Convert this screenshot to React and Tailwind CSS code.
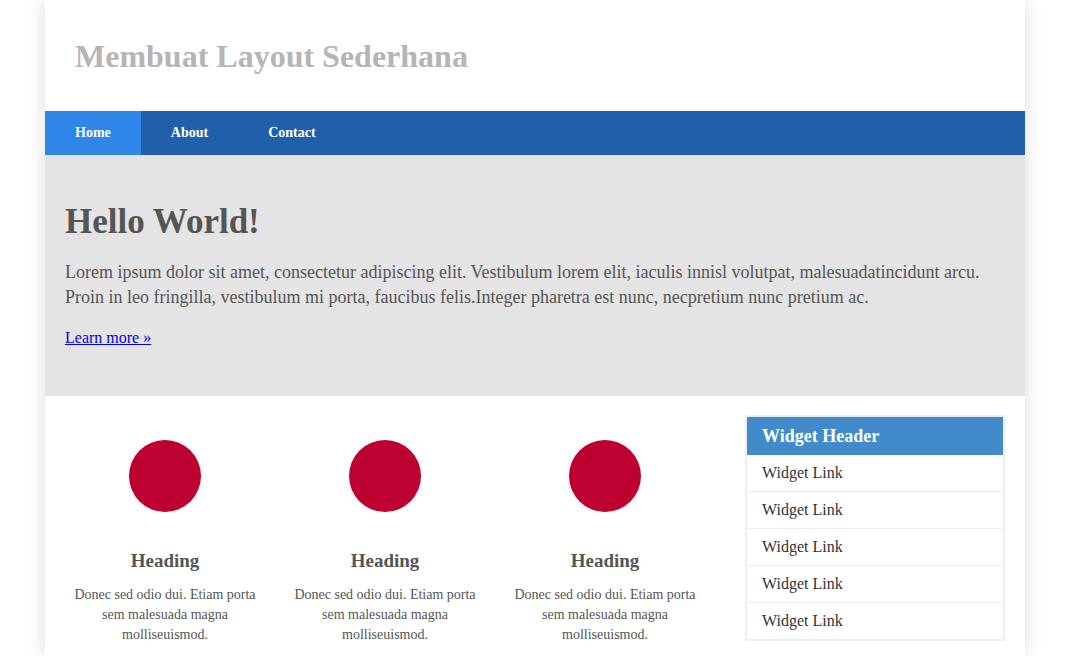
import React from 'react';

const serif = { fontFamily: '"Liberation Serif", "Times New Roman", serif' };

const NavItem = ({ label, active }) => (
  <a
    href="#"
    className={
      active
        ? 'block px-[30px] leading-[44px] text-[14px] font-bold text-white bg-[#2e86e8]'
        : 'block px-[30px] leading-[44px] text-[14px] font-bold text-white'
    }
  >
    {label}
  </a>
);

const Feature = () => (
  <div className="w-[220px] flex flex-col items-center px-[10px]">
    <div className="w-[72px] h-[72px] rounded-full bg-[#bd002f] mt-[44px]" />
    <h3 className="mt-[37px] text-[19px] font-bold text-[#555] leading-[24px]">Heading</h3>
    <p className="mt-[12px] text-[14px] leading-[20px] text-[#555] text-center">
      Donec sed odio dui. Etiam porta sem malesuada magna molliseuismod.
    </p>
  </div>
);

const App = () => {
  const links = ['Widget Link', 'Widget Link', 'Widget Link', 'Widget Link', 'Widget Link'];
  return (
    <div className="min-h-[656px] bg-white" style={serif}>
      <div className="w-[980px] ml-[45px] bg-white shadow-[0_0_18px_rgba(0,0,0,0.14)] min-h-[656px]">
        <header className="h-[111px] flex items-center px-[30px]">
          <h1 className="text-[32px] font-bold text-[#b5b5b5] mt-[1px]">Membuat Layout Sederhana</h1>
        </header>
        <nav className="h-[44px] bg-[#2060ab] flex">
          <NavItem label="Home" active />
          <NavItem label="About" />
          <NavItem label="Contact" />
        </nav>
        <section className="bg-[#e4e4e4] h-[241px] px-[20px] pt-[45px]">
          <h2 className="text-[35px] font-bold text-[#555] leading-[44px]">Hello World!</h2>
          <p className="mt-[16px] text-[18px] leading-[25px] text-[#555]">
            Lorem ipsum dolor sit amet, consectetur adipiscing elit. Vestibulum lorem elit, iaculis innisl volutpat, malesuadatincidunt arcu.
            <br />
            Proin in leo fringilla, vestibulum mi porta, faucibus felis.Integer pharetra est nunc, necpretium nunc pretium ac.
          </p>
          <a href="#" className="inline-block mt-[18px] text-[16px] text-[#0000ee] underline leading-[20px]">
            Learn more »
          </a>
        </section>
        <div className="flex px-[10px]">
          <div className="flex">
            <Feature />
            <Feature />
            <Feature />
          </div>
          <aside className="ml-[30px] mt-[19px] w-[260px] border-2 border-[#eee] self-start">
            <div className="bg-[#418bca] h-[38px] flex items-center px-[15px] text-[18px] font-bold text-white">
              Widget Header
            </div>
            {links.map((l, i) => (
              <a
                key={i}
                href="#"
                className={
                  i < links.length - 1
                    ? 'block h-[37px] leading-[36px] px-[15px] text-[16px] text-[#333] border-b border-[#eee]'
                    : 'block h-[36px] leading-[36px] px-[15px] text-[16px] text-[#333]'
                }
              >
                {l}
              </a>
            ))}
          </aside>
        </div>
      </div>
    </div>
  );
};

export default App;
